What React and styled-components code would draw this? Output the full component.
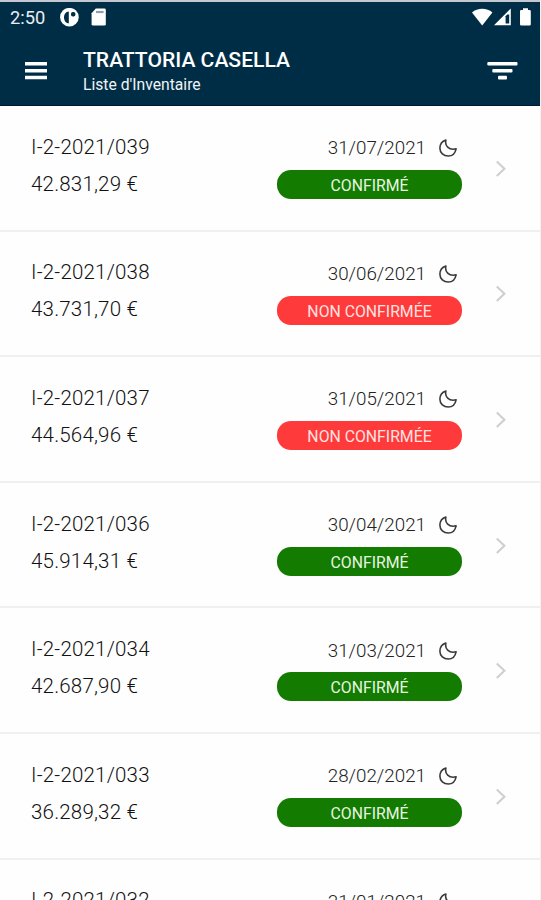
import styled, { createGlobalStyle } from "styled-components";

const inventories = [
  { id: "I-2-2021/039", amount: "42.831,29 €", date: "31/07/2021", status: "CONFIRMÉ" },
  { id: "I-2-2021/038", amount: "43.731,70 €", date: "30/06/2021", status: "NON CONFIRMÉE" },
  { id: "I-2-2021/037", amount: "44.564,96 €", date: "31/05/2021", status: "NON CONFIRMÉE" },
  { id: "I-2-2021/036", amount: "45.914,31 €", date: "30/04/2021", status: "CONFIRMÉ" },
  { id: "I-2-2021/034", amount: "42.687,90 €", date: "31/03/2021", status: "CONFIRMÉ" },
  { id: "I-2-2021/033", amount: "36.289,32 €", date: "28/02/2021", status: "CONFIRMÉ" },
  { id: "I-2-2021/032", date: "31/01/2021" },
];

const MoonIcon = () => (
  <svg width="18" height="18" viewBox="0 0 18 18" fill="none" stroke="#3a3a3a" strokeWidth="1.6" strokeLinejoin="round">
    <path d="M6.9 1 C5.6 6.4 9.6 11.6 17.1 9.8 C16.2 14.2 13.2 17 9.3 17 C4.6 17 0.9 13.7 0.9 9.2 C0.9 5.4 3.2 2.2 6.9 1 Z" />
  </svg>
);

const StatusIcons = () => (
  <svg width="60" height="20" viewBox="0 0 60 20" fill="#fff">
    <path d="M0 4.6 C5.5 -0.4 15 -0.4 20.4 4.6 L10.2 17.4 Z" />
    <path d="M38.8 0.5 V17.3 H22 Z" />
    <path d="M35.2 6.5 H37.2 V15.6 H33.6 V8.2 Z" fill="#002d46" />
    <path d="M51 0.2 H56 V2 H57.6 Q58.8 2 58.8 3.2 V16.2 Q58.8 17.4 57.6 17.4 H49.2 Q48 17.4 48 16.2 V3.2 Q48 2 49.2 2 H51 Z" />
  </svg>
);

const Row = ({ item }) => (
  <Item>
    <Info>
      <Line>{item.id}</Line>
      {item.amount && <Line>{item.amount}</Line>}
    </Info>
    <State>
      <DateLine>
        <DateText>{item.date}</DateText>
        <MoonIcon />
      </DateLine>
      {item.status && (
        <Badge $confirmed={item.status === "CONFIRMÉ"}>{item.status}</Badge>
      )}
    </State>
    <Arrow>
      <svg width="12" height="18" viewBox="0 0 12 18" fill="none" stroke="#cfcfcf" strokeWidth="2.1">
        <path d="M1.8 1.6 L9.4 8.8 L1.8 16" />
      </svg>
    </Arrow>
  </Item>
);

export default function App() {
  return (
    <Screen>
      <GlobalStyle />
      <Header>
        <StatusBar>
          <Clock>2:50</Clock>
          <svg width="48" height="20" viewBox="0 0 48 20">
            <circle cx="9.4" cy="9.2" r="9.3" fill="#fff" />
            <path d="M8.8 3.4 C2.4 3.6 2.4 15 8.8 15.2 Z" fill="#002d46" />
            <rect x="11" y="4" width="4.4" height="4.6" rx="1.8" fill="#002d46" />
            <path d="M35.8 0.6 H44.4 Q45.8 0.6 45.8 2 V16.2 Q45.8 17.6 44.4 17.6 H33 Q31.6 17.6 31.6 16.2 V5.2 Z" fill="#fff" />
            <path d="M36 4 H43.6" stroke="#8e9faa" strokeWidth="2.2" />
          </svg>
          <Spacer />
          <StatusIcons />
        </StatusBar>
        <Toolbar>
          <IconButton aria-label="Menu">
            <svg width="22" height="18" viewBox="0 0 22 18" fill="#fff">
              <path d="M0 0.1 H22 V3.6 H0 Z M0 7.1 H22 V10.6 H0 Z M0 13.8 H22 V17.3 H0 Z" />
            </svg>
          </IconButton>
          <Titles>
            <Title>TRATTORIA CASELLA</Title>
            <Subtitle>Liste d'Inventaire</Subtitle>
          </Titles>
          <Spacer />
          <IconButton aria-label="Filtre">
            <svg width="31" height="20" viewBox="0 0 31 20" fill="#fff">
              <rect x="0.3" y="0" width="30.2" height="3.6" rx="1" />
              <rect x="5.3" y="7" width="20.2" height="3.6" rx="1" />
              <rect x="11" y="13.8" width="9" height="3.8" rx="1" />
            </svg>
          </IconButton>
        </Toolbar>
      </Header>
      <List>
        {inventories.map((item) => (
          <Row key={item.id} item={item} />
        ))}
      </List>
    </Screen>
  );
}

const GlobalStyle = createGlobalStyle`
  body {
    margin: 0;
    background: #fefefe;
  }
  * {
    box-sizing: border-box;
  }
`;

const Screen = styled.div`
  height: 900px;
  overflow: hidden;
  display: flex;
  flex-direction: column;
  font-family: Roboto, sans-serif;
  border-right: 1px solid #f2f2f2;
`;

const Header = styled.header`
  flex: none;
  height: 106px;
  margin-right: -1px;
  background: #002d46;
  border-top: 2px solid #c3c8d0;
  border-bottom: 1px solid #00173a;
  border-right: 1px solid #00173a;
  color: #fff;
`;

const StatusBar = styled.div`
  display: flex;
  height: 32px;
  padding: 6px 8px 0 10px;
`;

const Clock = styled.span`
  width: 50px;
  color: #e9edf0;
  font-size: 18.3px;
  line-height: 20px;
`;

const Spacer = styled.div`
  flex: 1;
`;

const Toolbar = styled.div`
  display: flex;
  padding: 12px 22px 0 25px;
`;

const IconButton = styled.button`
  display: flex;
  padding: 16px 0 0;
  border: 0;
  background: none;
`;

const Titles = styled.div`
  margin-left: 36px;
`;

const Title = styled.h1`
  margin: 0;
  font-size: 21.1px;
  line-height: 28px;
  font-weight: 500;
`;

const Subtitle = styled.p`
  margin: 0;
  color: #f0f3f5;
  font-size: 15.7px;
  line-height: 22px;
`;

const List = styled.ul`
  margin: 0;
  padding: 0;
  list-style: none;
`;

const Item = styled.li`
  display: flex;
  height: 125.6px;
  padding: 22.4px 33px 0 31px;
  border-bottom: 2px solid #f0f0f0;
`;

const Info = styled.div`
  flex: 1;
  padding-top: 0.4px;
  color: #111;
  font-size: 20.5px;
  font-weight: 300;
  letter-spacing: 0.2px;
`;

const Line = styled.div`
  line-height: 37px;
`;

const State = styled.div`
  width: 185px;
`;

const DateLine = styled.div`
  display: flex;
  justify-content: flex-end;
  align-items: center;
  gap: 13px;
  height: 41.6px;
  padding: 0 5px 2px 0;
`;

const DateText = styled.span`
  color: #222;
  font-size: 18.8px;
  font-weight: 300;
`;

const Badge = styled.div`
  height: 29px;
  border-radius: 14px;
  background: ${(props) => (props.$confirmed ? "#137b00" : "#ff3a3a")};
  color: ${(props) => (props.$confirmed ? "#e6f5e2" : "#ffe2e2")};
  font-size: 15.8px;
  line-height: 31px;
  text-align: center;
`;

const Arrow = styled.div`
  width: 12px;
  margin-left: 33px;
  padding-top: 31.4px;
`;
